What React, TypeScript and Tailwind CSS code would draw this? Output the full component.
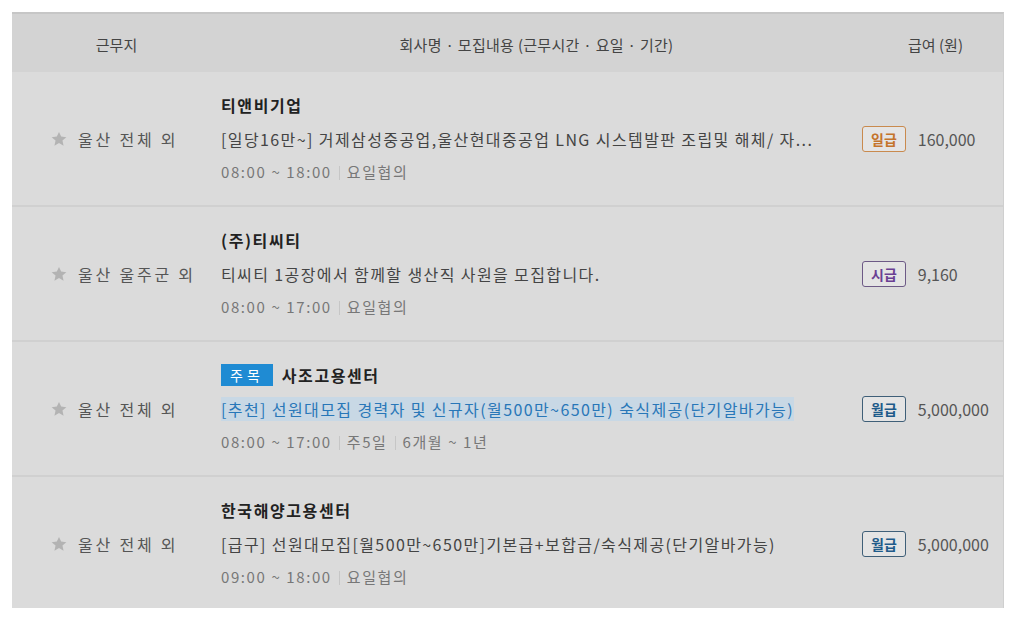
import React from 'react';

type Job = {
    id: number;
    location: string;
    company: string;
    featured?: boolean;
    title: string;
    highlight?: boolean;
    meta: string[];
    payType: string;
    payStyle: string;
    pay: string;
};

const jobs: Job[] = [
    {
        id: 1,
        location: '울산 전체 외',
        company: '티앤비기업',
        title: '[일당16만~] 거제삼성중공업,울산현대중공업 LNG 시스템발판 조립및 해체/ 자...',
        meta: ['08:00 ~ 18:00', '요일협의'],
        payType: '일급',
        payStyle: 'border-[#c98a4e] text-[#c4742c]',
        pay: '160,000',
    },
    {
        id: 2,
        location: '울산 울주군 외',
        company: '(주)티씨티',
        title: '티씨티 1공장에서 함께할 생산직 사원을 모집합니다.',
        meta: ['08:00 ~ 17:00', '요일협의'],
        payType: '시급',
        payStyle: 'border-[#6d5a86] text-[#6a3f93]',
        pay: '9,160',
    },
    {
        id: 3,
        location: '울산 전체 외',
        company: '사조고용센터',
        featured: true,
        title: '[추천] 선원대모집 경력자 및 신규자(월500만~650만) 숙식제공(단기알바가능)',
        highlight: true,
        meta: ['08:00 ~ 17:00', '주5일', '6개월 ~ 1년'],
        payType: '월급',
        payStyle: 'border-[#3f5f78] text-[#1f5b8a]',
        pay: '5,000,000',
    },
    {
        id: 4,
        location: '울산 전체 외',
        company: '한국해양고용센터',
        title: '[급구] 선원대모집[월500만~650만]기본급+보합금/숙식제공(단기알바가능)',
        meta: ['09:00 ~ 18:00', '요일협의'],
        payType: '월급',
        payStyle: 'border-[#3f5f78] text-[#1f5b8a]',
        pay: '5,000,000',
    },
];

function StarIcon() {
    return (
        <svg viewBox="0 0 24 24" className="w-[18px] h-[18px] shrink-0" fill="#b3b3b3">
            <path d="M12 2.5l2.9 6.3 6.9.7-5.2 4.6 1.5 6.8L12 17.4l-6.1 3.5 1.5-6.8-5.2-4.6 6.9-.7z" />
        </svg>
    );
}

export default function App() {
    return (
        <div
            className="w-full h-[620px] bg-white pt-3 pl-3 overflow-hidden"
            style={{ fontFamily: '"Noto Sans CJK KR", "Noto Sans", sans-serif' }}
        >
            <div className="w-[992px] h-[596px] overflow-hidden bg-[#dbdbdb] border-t-2 border-[#c6c6c6] border-r border-r-[#cfcfcf]">
                {/* Header */}
                <div className="flex items-center h-[58px] pt-1 bg-[#d3d3d3] text-[15px] text-[#444]">
                    <div className="w-[209px] text-center">근무지</div>
                    <div className="w-[631px] text-center tracking-[0.3px]">회사명 · 모집내용 (근무시간 · 요일 · 기간)</div>
                    <div className="flex-1 text-center pl-4">급여 (원)</div>
                </div>

                {jobs.map((job) => (
                    <div key={job.id} className="flex items-center h-[135px] border-b-2 border-[#d0d0d0] shrink-0">
                        {/* Location */}
                        <div className="w-[209px] flex items-center gap-[10px] pl-[38px] text-[16px] text-[#555] tracking-[2.8px]">
                            <StarIcon />
                            <span className="whitespace-nowrap">{job.location}</span>
                        </div>

                        {/* Content */}
                        <div className="w-[631px] flex flex-col">
                            <div className="flex items-center gap-[9px] h-[34px]">
                                {job.featured && (
                                    <span className="bg-[#1f8bd3] text-white text-[14px] leading-[22px] px-[9px] tracking-[4px]">
                                        주목
                                    </span>
                                )}
                                <span className="text-[16px] font-bold text-[#222] tracking-[1.6px]">{job.company}</span>
                            </div>
                            <div className="h-[34px] flex items-center">
                                <span
                                    className={`text-[16px] whitespace-nowrap tracking-[1.4px] ${
                                        job.highlight ? 'text-[#2877b8] bg-[#c8d8e5]' : 'text-[#444]'
                                    }`}
                                >
                                    {job.title}
                                </span>
                            </div>
                            <div className="h-[34px] flex items-center text-[15px] text-[#777] tracking-[1.6px]">
                                {job.meta.map((m, i) => (
                                    <React.Fragment key={i}>
                                        {i > 0 && <span className="w-px h-[14px] bg-[#c6c6c6] mx-[7px]"></span>}
                                        <span>{m}</span>
                                    </React.Fragment>
                                ))}
                            </div>
                        </div>

                        {/* Pay */}
                        <div className="flex-1 flex items-center gap-3 pl-[10px]">
                            <span
                                className={`border-[1.5px] rounded-[3px] bg-[#e4e4e4] text-[14px] font-bold leading-[24px] px-[8px] ${job.payStyle}`}
                            >
                                {job.payType}
                            </span>
                            <span className="text-[16px] text-[#555]">{job.pay}</span>
                        </div>
                    </div>
                ))}
            </div>
        </div>
    );
}
